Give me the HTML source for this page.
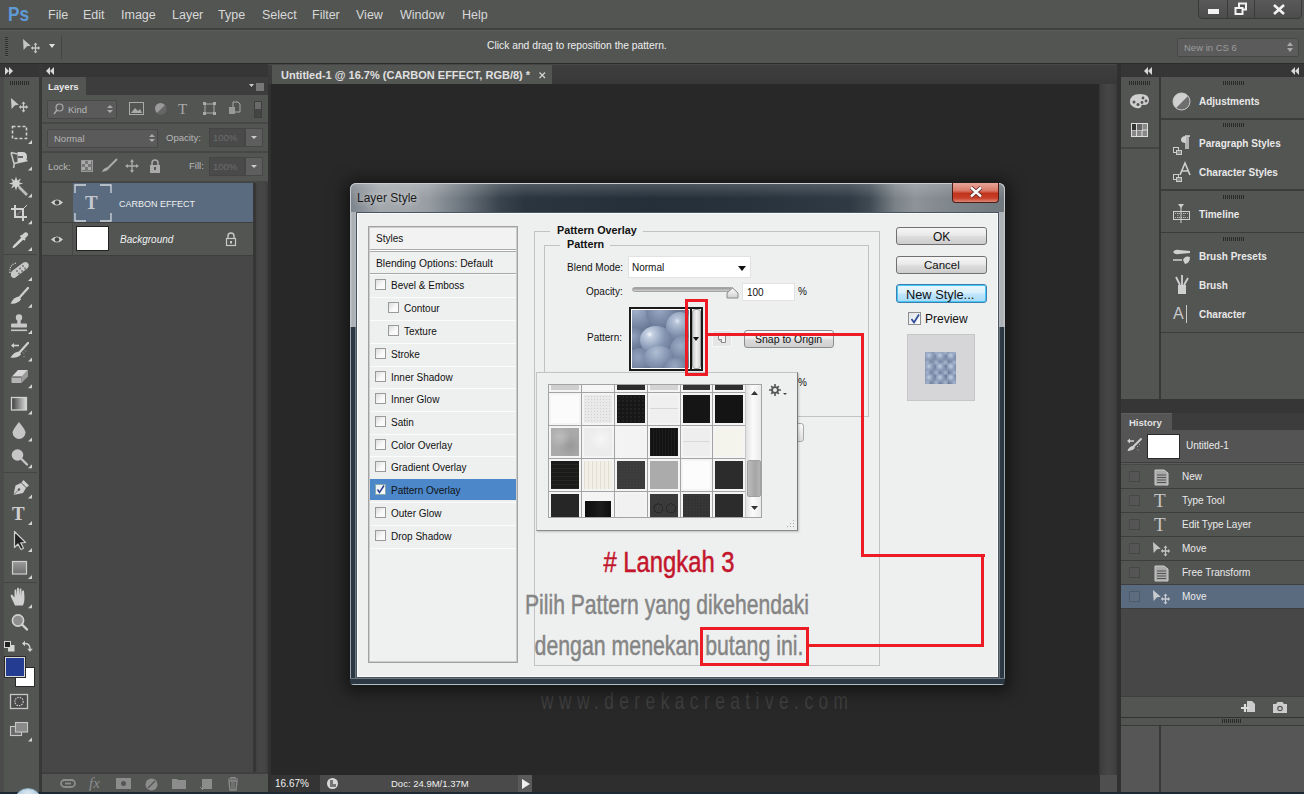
<!DOCTYPE html>
<html><head><meta charset="utf-8">
<style>
*{margin:0;padding:0;box-sizing:border-box}
html,body{width:1304px;height:794px;overflow:hidden}
body{position:relative;background:#535553;font-family:"Liberation Sans",sans-serif;color:#e6e6e6}
.a{position:absolute}
.t{position:absolute;white-space:nowrap;line-height:1}
.m{font-size:12.5px;color:#d8d8d8;top:9px}
.ic{position:absolute;overflow:visible}
.corner{position:absolute;width:0;height:0;border-left:4px solid transparent;border-bottom:4px solid #d0d0d0}
.pl{font-size:10px;font-weight:bold;color:#e8e8e8}
.grip{position:absolute;height:4px;background:repeating-linear-gradient(90deg,#2a2a2a 0 1px,transparent 1px 2px)}
.hi{position:absolute;left:1121px;width:183px;height:24px;border-bottom:1px solid #3d3d3d}
.hcb{position:absolute;left:8px;top:6px;width:11px;height:11px;border:1px solid #474747;background:#555}
.ht{position:absolute;left:61px;top:7px;font-size:10px;color:#eaeaea;white-space:nowrap;line-height:1}
</style></head><body>

<!-- ===== MENU BAR ===== -->
<div class="t" style="left:8px;top:3px;font-size:21px;font-weight:bold;color:#5f9ad6;transform:scaleX(0.82);transform-origin:0 0">Ps</div>
<div class="t m" style="left:48px">File</div>
<div class="t m" style="left:83px">Edit</div>
<div class="t m" style="left:121px">Image</div>
<div class="t m" style="left:172px">Layer</div>
<div class="t m" style="left:218px">Type</div>
<div class="t m" style="left:262px">Select</div>
<div class="t m" style="left:312px">Filter</div>
<div class="t m" style="left:356px">View</div>
<div class="t m" style="left:400px">Window</div>
<div class="t m" style="left:462px">Help</div>
<!-- window buttons -->
<div class="a" style="left:1198px;top:-2px;width:104px;height:21px;border:1px solid #3a3a3a;border-radius:0 0 4px 4px;background:linear-gradient(#5a5a5a,#4c4c4c)"></div>
<div class="a" style="left:1227px;top:0;width:1px;height:18px;background:#3a3a3a"></div>
<div class="a" style="left:1254px;top:0;width:1px;height:18px;background:#3a3a3a"></div>
<div class="a" style="left:1208px;top:9px;width:11px;height:5px;background:#f2f2f2"></div>
<svg class="ic" style="left:1234px;top:2px" width="14" height="14"><rect x="5" y="1.5" width="7" height="6" fill="none" stroke="#f2f2f2" stroke-width="2"/><rect x="1.5" y="6" width="7" height="6" fill="#4f4f4f" stroke="#f2f2f2" stroke-width="2"/></svg>
<svg class="ic" style="left:1272px;top:3px" width="14" height="13"><path d="M2 2L12 11M12 2L2 11" stroke="#f2f2f2" stroke-width="2.6"/></svg>

<!-- ===== OPTIONS BAR ===== -->
<div class="a" style="left:0;top:28px;width:1304px;height:2px;background:#404040"></div>
<div class="a" style="left:0;top:30px;width:1304px;height:1px;background:#5e5e5e"></div>
<div class="a" style="left:5px;top:37px;width:3px;height:20px;background:repeating-linear-gradient(#2f2f2f 0 1px,#5a5a5a 1px 2px)"></div>
<svg class="ic" style="left:22px;top:38px" width="20" height="16"><path d="M1 1L8.8 7.8L5 8.3L1.6 12Z" fill="#c4c4c4"/><path d="M13.5 6V14M10.5 10H16.5" stroke="#c4c4c4" stroke-width="1.3"/><path d="M13.5 4.5l-2 2.2h4zM13.5 15.5l-2-2.2h4zM8.8 10l2.2-2v4zM18.2 10l-2.2-2v4z" fill="#c4c4c4"/></svg>
<svg class="ic" style="left:49px;top:44px" width="7" height="5"><path d="M0 0H6L3 4Z" fill="#e0e0e0"/></svg>
<div class="a" style="left:61px;top:35px;width:1px;height:24px;background:#444"></div>
<div class="t" style="left:487px;top:41px;font-size:10.3px;color:#eeeeee">Click and drag to reposition the pattern.</div>
<div class="a" style="left:1177px;top:38px;width:122px;height:19px;border:1px solid #474747;border-radius:2px;background:#5b5b5b"></div>
<div class="t" style="left:1184px;top:43px;font-size:9.5px;color:#9c9c9c">New in CS 6</div>
<svg class="ic" style="left:1287px;top:41px" width="7" height="12"><path d="M0 5L3 1L6 5ZM0 7L3 11L6 7Z" fill="#a8a8a8"/></svg>
<div class="a" style="left:0;top:63px;width:1304px;height:1px;background:#2c2c2c"></div>

<!-- ===== HEADER ROWS ===== -->
<div class="a" style="left:0;top:64px;width:268px;height:13px;background:#363636"></div>
<svg class="ic" style="left:5px;top:67px" width="9" height="8"><path d="M0 0L4 4L0 8ZM4 0L8 4L4 8Z" fill="#d8d8d8"/></svg>
<svg class="ic" style="left:46px;top:67px" width="9" height="8"><path d="M4 0L0 4L4 8ZM8 0L4 4L8 8Z" fill="#d8d8d8"/></svg>

<!-- ===== TOOLS PANEL ===== -->
<div class="a" style="left:0;top:77px;width:39px;height:717px;background:#535553"></div>
<div class="a" style="left:0;top:77px;width:4px;height:717px;background:#4b4b4b"></div>
<div class="a" style="left:39px;top:64px;width:3px;height:730px;background:#383838"></div>
<div class="grip" style="left:10px;top:81px;width:20px"></div>
<!-- tool icons -->
<svg class="ic" style="left:0;top:0" width="40" height="794" viewBox="0 0 40 794">
<defs>
<linearGradient id="tg1" x1="0" x2="1"><stop offset="0" stop-color="#3c3c3c"/><stop offset="1" stop-color="#dcdcdc"/></linearGradient>
<linearGradient id="tg2" x1="0" y1="0" x2="0" y2="1"><stop offset="0" stop-color="#9a9a9a"/><stop offset="1" stop-color="#6e6e6e"/></linearGradient>
</defs>
<g fill="#c9c9c9" stroke="none">
<!-- move -->
<path d="M11 98L18.8 104.8L15 105.3L11.6 109Z"/>
<path d="M23.5 101.5l-2 2.2h4zM23.5 112.5l-2-2.2h4zM18.8 107l2.2-2v4zM28.2 107l-2.2-2v4z"/>
</g>
<path d="M23.5 103V111M20.5 107H26.5" stroke="#c9c9c9" stroke-width="1.3"/>
<!-- marquee -->
<rect x="12.5" y="126.5" width="14" height="12" fill="none" stroke="#cfcfcf" stroke-width="1.6" stroke-dasharray="3 2"/>
<!-- magnetic lasso -->
<path d="M11 152.5L17.5 154M11 152.5L14 163.5L27.5 160.5M14.5 163L13.5 168" stroke="#c8c8c8" stroke-width="1.5" fill="none"/>
<path d="M17.5 152H22.5Q27 152 27 157Q27 162 22.5 162H17.5Z" fill="#d2d2d2"/>
<path d="M18 157H23" stroke="#5a5a5a" stroke-width="1.8"/>
<!-- wand -->
<path d="M16 176.5l1.3 4 3.7-2-2 3.7 4 1.3-4 1.3 2 3.7-3.7-2-1.3 4-1.3-4-3.7 2 2-3.7-4-1.3 4-1.3-2-3.7 3.7 2z" fill="#cfcfcf"/>
<path d="M19 187L27 195" stroke="#bdbdbd" stroke-width="2.6"/>
<!-- crop -->
<path d="M15 205V217H27M11 209H23V221" fill="none" stroke="#d2d2d2" stroke-width="2"/>
<path d="M23 209L27 205" stroke="#cfcfcf" stroke-width="1"/>
<path d="M16.5 215.5L21.5 210.5" stroke="#777" stroke-width="1.5"/>
<!-- eyedropper -->
<path d="M21 236L24 233Q26 231.5 27.5 233Q29 234.5 27 236.5L24 239.5Z" fill="#cfcfcf"/>
<path d="M20.5 235.5L25 240" stroke="#cfcfcf" stroke-width="2"/>
<path d="M22 238L14.5 245.5L13 247.5L15 246.5L23.5 238.5" fill="none" stroke="#d6d6d6" stroke-width="1.4"/>
<!-- sep -->
<rect x="4" y="254" width="33" height="1" fill="#444"/>
<!-- healing -->
<path d="M12 271L23.5 262.5Q27 261 28.5 264Q29.5 267 26.5 269L15.5 277.5Q12.5 279 11 276Q10 273 12 271Z" fill="#c8c8c8"/>
<g fill="#6a6a6a"><circle cx="17" cy="271" r="0.9"/><circle cx="20" cy="268.5" r="0.9"/><circle cx="23" cy="266" r="0.9"/><circle cx="19" cy="273.5" r="0.9"/><circle cx="22" cy="271" r="0.9"/><circle cx="25" cy="268.5" r="0.9"/></g>
<path d="M10 273Q9 265 16 263" fill="none" stroke="#dcdcdc" stroke-width="1.2" stroke-dasharray="1 1.3"/>
<!-- brush -->
<path d="M28 288L19 298" stroke="#cfcfcf" stroke-width="2.2" stroke-linecap="round"/>
<path d="M19.5 296.5Q14 296.5 10.5 303.5Q17 304.5 21 299.5Z" fill="#d0d0d0"/>
<!-- stamp -->
<circle cx="19" cy="317.5" r="3.2" fill="#c8c8c8"/>
<rect x="17.3" y="319" width="3.4" height="5" fill="#c8c8c8"/>
<rect x="11" y="323.5" width="16" height="4" rx="1" fill="#c8c8c8"/>
<rect x="11" y="329.5" width="16" height="1.6" fill="#c8c8c8"/>
<!-- history brush -->
<path d="M28 343L19 353" stroke="#cfcfcf" stroke-width="2.2" stroke-linecap="round"/>
<path d="M19.5 351.5Q14 351.5 10.5 357.5Q17 358.5 21 354.5Z" fill="#d0d0d0"/>
<path d="M12 345.5H19" stroke="#cfcfcf" stroke-width="1.6"/><path d="M11 345.5L14 343V348Z" fill="#cfcfcf"/>
<path d="M23 352.5l1 1M25 350.5l1 1M23.5 356l1 1" stroke="#aaa" stroke-width="1"/>
<!-- eraser -->
<path d="M11.5 377L18 370H28L21.5 377Z" fill="#d6d6d6"/>
<path d="M11.5 377H21.5V383H11.5Z" fill="#b4b4b4"/>
<path d="M21.5 377L28 370V376.5L21.5 383Z" fill="#9a9a9a"/>
<path d="M11.5 377H21.5" stroke="#444" stroke-width="1"/>
<!-- gradient -->
<rect x="11.5" y="397.5" width="15" height="12.5" fill="url(#tg1)" stroke="#d0d0d0" stroke-width="1.3"/>
<!-- blur -->
<path d="M19 422Q25.5 430 25.5 432.5A6.3 6.3 0 0 1 12.6 432.5Q12.6 430 19 422Z" fill="#c6c6c6"/>
<!-- dodge -->
<circle cx="17.5" cy="455" r="5.8" fill="#c6c6c6"/>
<path d="M21.5 459L27 464.5" stroke="#c6c6c6" stroke-width="2.3" stroke-linecap="round"/>
<!-- sep -->
<rect x="4" y="472" width="33" height="1" fill="#444"/>
<!-- pen -->
<path d="M23.5 480L29 485.5L26.5 487.5L21.5 482.5Z" fill="#cfcfcf"/>
<path d="M21 483L26 488L23 493L13.5 495L15.5 485.5Z" fill="#cfcfcf"/>
<circle cx="19" cy="489.5" r="1.2" fill="#555"/><path d="M13.5 495L18.5 490" stroke="#555" stroke-width="0.8"/>
<!-- path select -->
<path d="M14.5 531.5V547.5L18 544L21 549.5L23.5 548.3L20.7 542.8L25.5 542.5Z" fill="#222" stroke="#cfcfcf" stroke-width="1.2" stroke-linejoin="round"/>
<!-- rectangle -->
<rect x="12.5" y="561.5" width="14" height="12.5" fill="url(#tg2)" stroke="#cfcfcf" stroke-width="1.2"/>
<!-- sep -->
<rect x="4" y="582" width="33" height="1" fill="#444"/>
<!-- hand -->
<path d="M15 605.5L11 597Q10 594.5 12 594.5L14.5 597.5V591Q14.5 589 16.2 589.5L17 596V589Q17 587.5 18.7 587.8L19.5 596V589.5Q19.8 588 21.3 588.5L22 596.5V591.5Q22.3 590 24 590.5L24.5 598Q24.5 602 23 605.5Z" fill="#d0d0d0"/>
<!-- zoom -->
<circle cx="18" cy="620.5" r="5.6" fill="#8e8e8e" stroke="#d2d2d2" stroke-width="1.6"/>
<path d="M22 624.5L27 629.5" stroke="#d2d2d2" stroke-width="2.4" stroke-linecap="round"/>
<!-- default colors -->
<rect x="8.5" y="645.5" width="5.5" height="5.5" fill="#d6d6d6" stroke="#d6d6d6" stroke-width="1"/>
<rect x="4.5" y="641.5" width="6" height="6" fill="#222" stroke="#d6d6d6" stroke-width="1"/>
<!-- swap -->
<path d="M24 643.5Q30 643 30 649" fill="none" stroke="#cfcfcf" stroke-width="1.4"/>
<path d="M22 643.5L25 640.8V646.2ZM30 652L27.2 648.8H32.8Z" fill="#cfcfcf"/>
<!-- quick mask -->
<rect x="10.5" y="694.5" width="17" height="14" fill="#4a4a4a" stroke="#c6c6c6" stroke-width="1.3"/>
<circle cx="19" cy="701.5" r="4.2" fill="none" stroke="#c6c6c6" stroke-width="1.2" stroke-dasharray="1.5 1"/>
<!-- screen mode -->
<rect x="10.5" y="726.5" width="11" height="9" fill="#6a6a6a" stroke="#c6c6c6" stroke-width="1.1"/>
<rect x="15.5" y="722.5" width="12" height="9.5" fill="#8a8a8a" stroke="#c6c6c6" stroke-width="1.1"/>
<!-- corners -->
<g fill="#d4d4d4">
<path d="M32 140V144H28Z"/><path d="M32 166.5V170.5H28Z"/><path d="M32 193.5V197.5H28Z"/><path d="M32 220.3V224.3H28Z"/><path d="M32 247V251H28Z"/>
<path d="M32 277V281H28Z"/><path d="M32 303.8V307.8H28Z"/><path d="M32 330V334H28Z"/><path d="M32 357.6V361.6H28Z"/><path d="M32 384.3V388.3H28Z"/><path d="M32 410.5V414.5H28Z"/><path d="M32 437.6V441.6H28Z"/><path d="M32 464.3V468.3H28Z"/>
<path d="M32 494.5V498.5H28Z"/><path d="M32 521V525H28Z"/><path d="M32 548V552H28Z"/><path d="M32 575V579H28Z"/><path d="M32 604.3V608.3H28Z"/><path d="M32 737.5V741.5H28Z"/>
</g>
</svg>
<div class="t" style="left:12px;top:504px;font-family:'Liberation Serif',serif;font-weight:bold;font-size:19px;color:#cfcfcf">T</div>
<div class="a" style="left:15px;top:667px;width:20px;height:20px;background:#fff;border:1px solid #2a2a2a"></div>
<div class="a" style="left:5px;top:657px;width:20px;height:20px;background:#243c92;border:1px solid #d8d8d8;outline:1px solid #2a2a2a"></div>

<!-- ===== LAYERS PANEL ===== -->
<div class="a" style="left:42px;top:77px;width:226px;height:18px;background:#3d3d3d"></div>
<div class="a" style="left:42px;top:77px;width:44px;height:18px;background:#535553"></div>
<div class="t" style="left:48px;top:82px;font-size:9.5px;font-weight:bold;color:#e8e8e8">Layers</div>
<svg class="ic" style="left:249px;top:83px" width="16" height="8"><path d="M0 1H5L2.5 4Z" fill="#ccc"/><rect x="7" y="0" width="8" height="8" fill="#777"/></svg>
<div class="a" style="left:42px;top:95px;width:226px;height:87px;background:#535553"></div>
<div class="a" style="left:42px;top:122px;width:226px;height:2px;background:#474747"></div>
<div class="a" style="left:42px;top:151px;width:226px;height:2px;background:#474747"></div>
<div class="a" style="left:42px;top:181px;width:226px;height:2px;background:#454545"></div>
<!-- row1 -->
<div class="a" style="left:47px;top:100px;width:70px;height:19px;border:1px solid #484848;border-radius:2px;background:#5a5a5a"></div>
<svg class="ic" style="left:53px;top:103px" width="11" height="12"><circle cx="6.5" cy="4.5" r="3.5" fill="none" stroke="#aaa" stroke-width="1.2"/><path d="M4 7L1 11" stroke="#aaa" stroke-width="1.4"/></svg>
<div class="t" style="left:68px;top:105px;font-size:9.5px;color:#b8b8b8">Kind</div>
<svg class="ic" style="left:107px;top:104px" width="6" height="11"><path d="M0 4L3 1L6 4ZM0 6L3 9L6 6Z" fill="#aaa"/></svg>
<svg class="ic" style="left:129px;top:102px" width="15" height="13"><rect x="0.5" y="0.5" width="14" height="12" fill="none" stroke="#aaa"/><path d="M2 11L6 6L9 9L11 7L13 11Z" fill="#aaa"/></svg>
<svg class="ic" style="left:154px;top:102px" width="13" height="13"><circle cx="6.5" cy="6.5" r="5.5" fill="#9a9a9a"/><path d="M11 3L3 11A5.5 5.5 0 0 0 11 3Z" fill="#666"/></svg>
<div class="t" style="left:178px;top:102px;font-family:'Liberation Serif',serif;font-size:15px;color:#aaa">T</div>
<svg class="ic" style="left:203px;top:102px" width="13" height="13"><rect x="2" y="2" width="9" height="9" fill="none" stroke="#aaa"/><rect x="0" y="0" width="3" height="3" fill="#aaa"/><rect x="10" y="0" width="3" height="3" fill="#aaa"/><rect x="0" y="10" width="3" height="3" fill="#aaa"/><rect x="10" y="10" width="3" height="3" fill="#aaa"/></svg>
<svg class="ic" style="left:228px;top:101px" width="13" height="14"><path d="M5 1H10L12 3V11H5Z" fill="none" stroke="#aaa"/><rect x="1" y="6" width="6" height="7" fill="#999"/></svg>
<div class="a" style="left:254px;top:101px;width:8px;height:17px;background:#444;border:1px solid #3e3e3e"></div>
<div class="a" style="left:255px;top:102px;width:6px;height:7px;background:#6a6a6a"></div>
<!-- row2 -->
<div class="a" style="left:47px;top:129px;width:111px;height:19px;border:1px solid #484848;border-radius:2px;background:#5a5a5a"></div>
<div class="t" style="left:54px;top:134px;font-size:9.5px;color:#b4b4b4">Normal</div>
<svg class="ic" style="left:149px;top:133px" width="6" height="11"><path d="M0 4L3 1L6 4ZM0 6L3 9L6 6Z" fill="#aaa"/></svg>
<div class="t" style="left:166px;top:133px;font-size:9.5px;color:#b8b8b8">Opacity:</div>
<div class="a" style="left:209px;top:128px;width:36px;height:19px;background:#4a4a4a;border:1px solid #444"></div>
<div class="t" style="left:213px;top:133px;font-size:9.5px;color:#6c6c6c">100%</div>
<div class="a" style="left:245px;top:128px;width:18px;height:19px;background:#5e5e5e;border:1px solid #474747"></div>
<svg class="ic" style="left:251px;top:136px" width="7" height="4"><path d="M0 0H6L3 3Z" fill="#ccc"/></svg>
<!-- row3 -->
<div class="t" style="left:48px;top:162px;font-size:9.5px;color:#b8b8b8">Lock:</div>
<svg class="ic" style="left:81px;top:160px" width="12" height="12"><rect x="0.5" y="0.5" width="11" height="11" fill="#777" stroke="#999"/><path d="M1 1h3v3H1zM7 1h3v3H7zM4 4h3v3H4zM1 7h3v3H1zM7 7h3v3H7z" fill="#aaa"/></svg>
<svg class="ic" style="left:101px;top:158px" width="17" height="15"><path d="M16 1L7 10" stroke="#aaa" stroke-width="2"/><path d="M7 9Q2 10 1 14Q5 14 8 11Z" fill="#aaa"/></svg>
<svg class="ic" style="left:125px;top:159px" width="14" height="14"><path d="M7 1V13M1 7H13" stroke="#aaa" stroke-width="1.4"/><path d="M7 0L5 3H9ZM7 14L5 11H9ZM0 7L3 5V9ZM14 7L11 5V9Z" fill="#aaa"/></svg>
<svg class="ic" style="left:149px;top:159px" width="12" height="14"><path d="M3 6V4A3 3 0 0 1 9 4V6" fill="none" stroke="#aaa" stroke-width="1.5"/><rect x="1" y="6" width="10" height="8" fill="#aaa"/><rect x="5" y="8" width="2" height="3" fill="#555"/></svg>
<div class="t" style="left:189px;top:161px;font-size:9.5px;color:#b8b8b8">Fill:</div>
<div class="a" style="left:209px;top:157px;width:36px;height:19px;background:#4a4a4a;border:1px solid #444"></div>
<div class="t" style="left:213px;top:162px;font-size:9.5px;color:#6c6c6c">100%</div>
<div class="a" style="left:245px;top:157px;width:18px;height:19px;background:#5e5e5e;border:1px solid #474747"></div>
<svg class="ic" style="left:251px;top:165px" width="7" height="4"><path d="M0 0H6L3 3Z" fill="#ccc"/></svg>
<!-- layer rows -->
<div class="a" style="left:42px;top:183px;width:211px;height:40px;background:#535553"></div>
<div class="a" style="left:73px;top:183px;width:180px;height:39px;background:#5a6b80"></div>
<svg class="ic" style="left:74px;top:184px" width="38" height="38"><path d="M1 9V1H12M26 1H37V9M37 29V37H26M12 37H1V29" fill="none" stroke="#d2d7dd" stroke-width="1.3"/></svg>
<div class="t" style="left:85px;top:193px;font-family:'Liberation Serif',serif;font-weight:bold;font-size:19px;color:#c4c8cd">T</div>
<div class="t" style="left:119px;top:200px;font-size:9px;color:#eef0ef">CARBON EFFECT</div>
<div class="a" style="left:42px;top:222px;width:211px;height:1px;background:#3e3e3e"></div>
<div class="a" style="left:42px;top:223px;width:211px;height:32px;background:#535553"></div>
<div class="a" style="left:72px;top:223px;width:1px;height:32px;background:#474747"></div>
<div class="a" style="left:76px;top:226px;width:33px;height:25px;background:#fff;border:1px solid #222"></div>
<div class="t" style="left:120px;top:235px;font-size:10px;font-style:italic;color:#eef0ef">Background</div>
<svg class="ic" style="left:225px;top:232px" width="12" height="14"><path d="M3 6V4A3 3 0 0 1 9 4V6" fill="none" stroke="#c8c8c8" stroke-width="1.4"/><rect x="1.5" y="6.5" width="9" height="7" fill="none" stroke="#c8c8c8" stroke-width="1.2"/><rect x="5" y="9" width="2" height="2.5" fill="#c8c8c8"/></svg>
<svg class="ic" style="left:50px;top:198px" width="14" height="9"><path d="M1 4.5Q7 -1.5 13 4.5Q7 10.5 1 4.5Z" fill="#d0d0d0"/><circle cx="7" cy="4.5" r="2.3" fill="#444"/></svg>
<svg class="ic" style="left:50px;top:235px" width="14" height="9"><path d="M1 4.5Q7 -1.5 13 4.5Q7 10.5 1 4.5Z" fill="#d0d0d0"/><circle cx="7" cy="4.5" r="2.3" fill="#444"/></svg>
<div class="a" style="left:42px;top:255px;width:211px;height:1px;background:#3e3e3e"></div>
<div class="a" style="left:42px;top:256px;width:211px;height:516px;background:#474747"></div>
<div class="a" style="left:253px;top:183px;width:15px;height:589px;background:linear-gradient(90deg,#363636 0 3px,#424242 3px,#474747 8px,#434343 13px,#3a3a3a)"></div>
<div class="a" style="left:42px;top:772px;width:226px;height:2px;background:#3f3f3f"></div>
<div class="a" style="left:42px;top:774px;width:226px;height:18px;background:#535553"></div>
<svg class="ic" style="left:60px;top:778px" width="16" height="12"><rect x="1" y="2" width="14" height="7" rx="3.5" fill="none" stroke="#8c8c8c" stroke-width="1.8"/><path d="M5 5.5H11" stroke="#8c8c8c" stroke-width="1.8"/></svg>
<div class="t" style="left:89px;top:776px;font-family:'Liberation Serif',serif;font-style:italic;font-size:15px;color:#8c8c8c">fx</div>
<svg class="ic" style="left:116px;top:778px" width="16" height="12"><rect x="0" y="0" width="15" height="11" fill="#8c8c8c"/><circle cx="7.5" cy="5.5" r="2.5" fill="#555"/></svg>
<svg class="ic" style="left:145px;top:778px" width="13" height="13"><circle cx="6.5" cy="6.5" r="6" fill="#8c8c8c"/><path d="M10 3L3 10" stroke="#555" stroke-width="1.3"/></svg>
<svg class="ic" style="left:172px;top:778px" width="15" height="12"><path d="M0 1H5L6 2H14V11H0Z" fill="#8c8c8c"/></svg>
<svg class="ic" style="left:199px;top:778px" width="14" height="13"><path d="M3 1H13V11H3Z" fill="#8c8c8c"/><path d="M1 9L4 12" stroke="#8c8c8c" stroke-width="1"/></svg>
<svg class="ic" style="left:227px;top:777px" width="12" height="14"><path d="M1 2H11M4 2V0.5H8V2" stroke="#8c8c8c" stroke-width="1.2" fill="none"/><path d="M2 4H10L9 13H3Z" fill="none" stroke="#8c8c8c" stroke-width="1.3"/><path d="M5 5V12M7 5V12" stroke="#8c8c8c"/></svg>

<!-- ===== DOCUMENT ===== -->
<div class="a" style="left:268px;top:64px;width:853px;height:21px;background:linear-gradient(#3e3e3e,#383838);border-top:1px solid #474747"></div>
<div class="a" style="left:268px;top:85px;width:3px;height:707px;background:#313131"></div>
<div class="a" style="left:272px;top:65px;width:280px;height:19px;background:#535553"></div>
<div class="t" style="left:281px;top:70px;font-size:11px;font-weight:bold;color:#e0e0e0">Untitled-1 @ 16.7% (CARBON EFFECT, RGB/8) *</div>
<svg class="ic" style="left:539px;top:72px" width="7" height="7"><path d="M0.5 0.5L6 6M6 0.5L0.5 6" stroke="#d0d0d0" stroke-width="1.3"/></svg>
<div class="a" style="left:271px;top:84px;width:829px;height:691px;background:#282828"></div>
<div class="a" style="left:1099px;top:84px;width:18px;height:691px;background:linear-gradient(90deg,#363636,#3f3f3f 3px,#464646 9px,#414141 15px,#3a3a3a)"></div>
<div class="a" style="left:1117px;top:64px;width:4px;height:730px;background:#303030"></div>
<div class="a" style="left:1100px;top:775px;width:17px;height:17px;background:#4f4f4f"></div>
<!-- status bar -->
<div class="a" style="left:271px;top:775px;width:829px;height:17px;background:#2e2e2e"></div>
<div class="a" style="left:271px;top:775px;width:49px;height:17px;background:#343434"></div>
<div class="t" style="left:275px;top:779px;font-size:10px;color:#eef0ef">16.67%</div>
<div class="a" style="left:320px;top:775px;width:24px;height:17px;background:#4a4a4a"></div>
<svg class="ic" style="left:326px;top:777px" width="13" height="13"><circle cx="6.5" cy="6.5" r="5.5" fill="#d8d8d8"/><path d="M4 3V10H10V7H7V3Z" fill="#777"/></svg>
<div class="a" style="left:344px;top:775px;width:174px;height:17px;background:#4a4a4a"></div>
<div class="t" style="left:391px;top:779px;font-size:9.5px;color:#eef0ef">Doc: 24.9M/1.37M</div>
<div class="a" style="left:518px;top:775px;width:14px;height:17px;background:#5a5a5a"></div>
<svg class="ic" style="left:522px;top:779px" width="8" height="10"><path d="M0 0L8 5L0 10Z" fill="#eef0ef"/></svg>
<div class="t" style="left:541px;top:689px;font-size:24px;color:#3f3f3f;letter-spacing:7.6px;transform:scaleX(0.72);transform-origin:0 0">www.derekacreative.com</div>

<!-- DIALOG_START -->
<!-- ===== DIALOG ===== -->
<div class="a" style="left:350px;top:183px;width:655px;height:502px;border-radius:6px 6px 4px 4px;box-shadow:0 2px 16px 5px rgba(0,0,0,0.5);background:#2b3743"></div>
<!-- title bar gradient -->
<div class="a" style="left:350px;top:183px;width:655px;height:145px;border-radius:6px 6px 0 0;background:linear-gradient(90deg,#7b8289 0px,#a3a8ad 30px,#a0a5aa 60px,#979da3 78px,#6f7880 110px,#39434d 150px,#2a3540 175px,#252f39 300px,#28323c 400px,#2f3a44 500px,#3f4a53 520px,#7a8288 545px,#8d9398 565px,#7f868c 600px,#70777d 655px)"></div>
<div class="a" style="left:350px;top:183px;width:655px;height:30px;border-radius:6px 6px 0 0;background:linear-gradient(180deg,rgba(255,255,255,0.18),rgba(255,255,255,0) 50%);border:1px solid #c9cdd1;border-bottom:none"></div>
<div class="a" style="left:350px;top:212px;width:7px;height:115px;background:linear-gradient(90deg,#c4c8cc,#a9aeb3 40%,#b9bdc1)"></div>
<div class="a" style="left:998px;top:212px;width:7px;height:115px;background:linear-gradient(90deg,#b9bdc1,#a9aeb3 60%,#c4c8cc)"></div>
<div class="a" style="left:350px;top:327px;width:6px;height:351px;background:linear-gradient(90deg,#9aa4ac 0 1px,#2b3743 1px 5px,#6c7780 5px)"></div>
<div class="a" style="left:999px;top:327px;width:6px;height:351px;background:linear-gradient(90deg,#6c7780 0 1px,#2b3743 1px 5px,#9aa4ac 5px)"></div>
<div class="a" style="left:350px;top:678px;width:655px;height:7px;background:linear-gradient(180deg,#6c7780 0 1px,#2b3743 1px 6px,#b4bcc3 6px);border-radius:0 0 4px 4px"></div>
<div class="t" style="left:357px;top:192px;font-size:12px;color:#1c1c1c;text-shadow:0 0 6px rgba(255,255,255,0.8)">Layer Style</div>
<!-- close button -->
<div class="a" style="left:952px;top:183px;width:47px;height:20px;border:1px solid #4b1c16;border-top:none;border-radius:0 0 4px 4px;background:linear-gradient(180deg,#e9a69a 0%,#d97a68 40%,#c2331c 55%,#c8412a 80%,#de8a78 100%)"></div>
<svg class="ic" style="left:969px;top:186px" width="14" height="12"><path d="M2 1.5L12 10.5M12 1.5L2 10.5" stroke="#5a2520" stroke-width="4"/><path d="M2 1.5L12 10.5M12 1.5L2 10.5" stroke="#fafafa" stroke-width="2.4"/></svg>
<!-- client area -->
<div class="a" style="left:356px;top:212px;width:643px;height:466px;background:#eef0ef;border:1px solid #4a545e;box-shadow:inset 0 0 0 1px #fafbfc"></div>

<!-- styles list -->
<div class="a" style="left:368px;top:226px;width:150px;height:437px;border:1px solid #a2a2a2;box-shadow:inset 0 0 0 1px #cdcdcd;background:#eff0f0"></div>
<div class="a" style="left:370px;top:228px;width:146px;height:21px;background:#f2f2f2"></div>
<div class="a" style="left:370px;top:249px;width:146px;height:3px;background:linear-gradient(#aaa 0 1px,#fff 1px 2px,#aaa 2px)"></div>
<div class="a" style="left:370px;top:273px;width:146px;height:1px;background:#a8a8a8"></div>
<div class="t" style="left:376px;top:234px;font-size:10px;color:#111">Styles</div>
<div class="t" style="left:376px;top:259px;font-size:10.3px;color:#111">Blending Options: Default</div>
<div class="a" style="left:370px;top:274px;width:146px;height:23px;background:#eef0f0;border-top:1px solid #fbfbfb"></div>
<div class="a" style="left:375px;top:279px;width:11px;height:11px;border:1px solid #9a9a9a;background:linear-gradient(135deg,#dcdcdc,#fafafa 60%)"></div>
<div class="t" style="left:391px;top:281px;font-size:10px;color:#111">Bevel &amp; Emboss</div>
<div class="a" style="left:370px;top:297px;width:146px;height:23px;background:#eef0f0;border-top:1px solid #fbfbfb"></div>
<div class="a" style="left:388px;top:302px;width:11px;height:11px;border:1px solid #9a9a9a;background:linear-gradient(135deg,#dcdcdc,#fafafa 60%)"></div>
<div class="t" style="left:404px;top:304px;font-size:10px;color:#111">Contour</div>
<div class="a" style="left:370px;top:320px;width:146px;height:23px;background:#eef0f0;border-top:1px solid #fbfbfb"></div>
<div class="a" style="left:388px;top:325px;width:11px;height:11px;border:1px solid #9a9a9a;background:linear-gradient(135deg,#dcdcdc,#fafafa 60%)"></div>
<div class="t" style="left:404px;top:327px;font-size:10px;color:#111">Texture</div>
<div class="a" style="left:370px;top:343px;width:146px;height:23px;background:#eef0f0;border-top:1px solid #fbfbfb"></div>
<div class="a" style="left:375px;top:348px;width:11px;height:11px;border:1px solid #9a9a9a;background:linear-gradient(135deg,#dcdcdc,#fafafa 60%)"></div>
<div class="t" style="left:391px;top:350px;font-size:10px;color:#111">Stroke</div>
<div class="a" style="left:370px;top:366px;width:146px;height:22px;background:#eef0f0;border-top:1px solid #fbfbfb"></div>
<div class="a" style="left:375px;top:371px;width:11px;height:11px;border:1px solid #9a9a9a;background:linear-gradient(135deg,#dcdcdc,#fafafa 60%)"></div>
<div class="t" style="left:391px;top:373px;font-size:10px;color:#111">Inner Shadow</div>
<div class="a" style="left:370px;top:388px;width:146px;height:23px;background:#eef0f0;border-top:1px solid #fbfbfb"></div>
<div class="a" style="left:375px;top:393px;width:11px;height:11px;border:1px solid #9a9a9a;background:linear-gradient(135deg,#dcdcdc,#fafafa 60%)"></div>
<div class="t" style="left:391px;top:395px;font-size:10px;color:#111">Inner Glow</div>
<div class="a" style="left:370px;top:411px;width:146px;height:23px;background:#eef0f0;border-top:1px solid #fbfbfb"></div>
<div class="a" style="left:375px;top:416px;width:11px;height:11px;border:1px solid #9a9a9a;background:linear-gradient(135deg,#dcdcdc,#fafafa 60%)"></div>
<div class="t" style="left:391px;top:418px;font-size:10px;color:#111">Satin</div>
<div class="a" style="left:370px;top:434px;width:146px;height:22px;background:#eef0f0;border-top:1px solid #fbfbfb"></div>
<div class="a" style="left:375px;top:439px;width:11px;height:11px;border:1px solid #9a9a9a;background:linear-gradient(135deg,#dcdcdc,#fafafa 60%)"></div>
<div class="t" style="left:391px;top:441px;font-size:10px;color:#111">Color Overlay</div>
<div class="a" style="left:370px;top:456px;width:146px;height:23px;background:#eef0f0;border-top:1px solid #fbfbfb"></div>
<div class="a" style="left:375px;top:461px;width:11px;height:11px;border:1px solid #9a9a9a;background:linear-gradient(135deg,#dcdcdc,#fafafa 60%)"></div>
<div class="t" style="left:391px;top:463px;font-size:10px;color:#111">Gradient Overlay</div>
<div class="a" style="left:370px;top:479px;width:146px;height:23px;background:#eef0f0;border-top:1px solid #fbfbfb"></div><div class="a" style="left:370px;top:479px;width:146px;height:21px;background:#4b87c9"></div>
<div class="a" style="left:375px;top:484px;width:11px;height:11px;border:1px solid #8aa;background:linear-gradient(135deg,#e8eef4,#fdfdfd)"></div>
<svg class="ic" style="left:376px;top:485px" width="9" height="9"><path d="M1.5 4.5L3.5 7.5L8 0.5" fill="none" stroke="#2a3f8a" stroke-width="1.5"/></svg>
<div class="t" style="left:391px;top:486px;font-size:10px;color:#111">Pattern Overlay</div>
<div class="a" style="left:370px;top:502px;width:146px;height:23px;background:#eef0f0;border-top:1px solid #fbfbfb"></div>
<div class="a" style="left:375px;top:507px;width:11px;height:11px;border:1px solid #9a9a9a;background:linear-gradient(135deg,#dcdcdc,#fafafa 60%)"></div>
<div class="t" style="left:391px;top:509px;font-size:10px;color:#111">Outer Glow</div>
<div class="a" style="left:370px;top:525px;width:146px;height:23px;background:#eef0f0;border-top:1px solid #fbfbfb"></div>
<div class="a" style="left:375px;top:530px;width:11px;height:11px;border:1px solid #9a9a9a;background:linear-gradient(135deg,#dcdcdc,#fafafa 60%)"></div>
<div class="t" style="left:391px;top:532px;font-size:10px;color:#111">Drop Shadow</div>
<div class="a" style="left:370px;top:548px;width:146px;height:1px;background:#fbfbfb"></div>
<!-- group boxes -->
<div class="a" style="left:534px;top:231px;width:346px;height:435px;border:1px solid #c2c2c2;border-top-color:#c2c2c2"></div>
<div class="a" style="left:550px;top:225px;width:93px;height:12px;background:#eef0ef"></div>
<div class="t" style="left:557px;top:225px;font-size:10.8px;font-weight:bold;color:#111">Pattern Overlay</div>
<div class="a" style="left:544px;top:245px;width:325px;height:172px;border:1px solid #c2c2c2"></div>
<div class="a" style="left:560px;top:239px;width:50px;height:12px;background:#eef0ef"></div>
<div class="t" style="left:567px;top:239px;font-size:10.8px;font-weight:bold;color:#111">Pattern</div>
<div class="t" style="left:567px;top:263px;font-size:10px;color:#111">Blend Mode:</div>
<div class="a" style="left:628px;top:256px;width:123px;height:22px;background:#fff;border:1px solid #e2e2e2"></div>
<div class="t" style="left:632px;top:263px;font-size:10px;color:#111">Normal</div>
<svg class="ic" style="left:738px;top:266px" width="9" height="6"><path d="M0 0H8L4 5Z" fill="#111"/></svg>
<div class="t" style="left:586px;top:287px;font-size:10px;color:#111">Opacity:</div>
<div class="a" style="left:632px;top:287px;width:102px;height:5px;border-radius:3px;background:linear-gradient(#999,#cfcfcf);border:1px solid #a5a5a5"></div>
<svg class="ic" style="left:726px;top:287px" width="13" height="12"><path d="M1 11V6L6.5 1L12 6V11Z" fill="url(#thg)" stroke="#8a8a8a"/><defs><linearGradient id="thg" x1="0" y1="0" x2="0" y2="1"><stop offset="0" stop-color="#fff"/><stop offset="1" stop-color="#cfcfcf"/></linearGradient></defs></svg>
<div class="a" style="left:742px;top:283px;width:53px;height:18px;background:#fff;border:1px solid #e2e2e2"></div>
<div class="t" style="left:747px;top:288px;font-size:10px;color:#111">100</div>
<div class="t" style="left:798px;top:287px;font-size:10px;color:#111">%</div>
<div class="t" style="left:587px;top:333px;font-size:10px;color:#111">Pattern:</div>
<!-- pattern thumb -->
<div class="a" style="left:629px;top:307px;width:74px;height:64px;background:#fff;border:2px solid #1a1a1a"></div>
<div class="a" style="left:632px;top:310px;width:57px;height:58px;overflow:hidden;background:#6b7b98">
 <div class="a" style="left:-8px;top:-10px;width:30px;height:30px;border-radius:50%;background:radial-gradient(circle at 40% 35%,#a2b1c9,#7686a3 60%,#56657f)"></div>
 <div class="a" style="left:14px;top:-12px;width:30px;height:30px;border-radius:50%;background:radial-gradient(circle at 45% 40%,#98a8c2,#6f7f9c 65%,#52617b)"></div>
 <div class="a" style="left:34px;top:2px;width:28px;height:30px;border-radius:50%;background:radial-gradient(circle at 40% 30%,#dfe7f3 0,#b5c2d7 12%,#7e8eab 55%,#5a6984)"></div>
 <div class="a" style="left:-10px;top:16px;width:22px;height:26px;border-radius:50%;background:radial-gradient(circle at 50% 40%,#92a2bd,#687895 65%,#51607a)"></div>
 <div class="a" style="left:8px;top:16px;width:32px;height:28px;border-radius:50%;background:radial-gradient(circle at 30% 30%,#f4f8fd 0,#c6d2e4 10%,#8797b3 50%,#5e6d88)"></div>
 <div class="a" style="left:38px;top:26px;width:26px;height:28px;border-radius:50%;background:radial-gradient(circle at 40% 35%,#9eadc6,#72829f 60%,#56657f)"></div>
 <div class="a" style="left:-6px;top:38px;width:26px;height:26px;border-radius:50%;background:radial-gradient(circle at 45% 35%,#93a3be,#6a7a97 65%,#52617b)"></div>
 <div class="a" style="left:12px;top:36px;width:30px;height:24px;border-radius:50%;background:radial-gradient(circle at 40% 25%,#b0bdd3,#7f8fab 55%,#5c6b86)"></div>
 <div class="a" style="left:30px;top:48px;width:28px;height:22px;border-radius:50%;background:radial-gradient(circle at 45% 35%,#9aa9c2,#6f7f9c 60%,#55647e)"></div>
</div>
<div class="a" style="left:690px;top:309px;width:2px;height:60px;background:#111"></div>
<div class="a" style="left:692px;top:309px;width:9px;height:60px;border-radius:3px;background:linear-gradient(90deg,#cfcfcf,#eef0ef 50%,#d5d5d5);border:1px solid #a0a0a0"></div>
<svg class="ic" style="left:693px;top:337px" width="7" height="5"><path d="M0 0H6L3 4Z" fill="#111"/></svg>
<div class="a" style="left:712px;top:330px;width:20px;height:17px;background:#e6e6e6;border:1px solid #f6f6f6"></div>
<svg class="ic" style="left:715px;top:332px" width="14" height="13"><path d="M3.5 2.5H10.5V10.5H6.5L3.5 7.5Z" fill="#f4f4f4" stroke="#8a8a8a"/><path d="M3.5 7.5H6.5V10.5" fill="#cfcfcf" stroke="#8a8a8a"/></svg>
<div class="a" style="left:744px;top:330px;width:90px;height:18px;border-radius:3px;border:1px solid #8c8c8c;background:linear-gradient(#fbfbfb,#ececec 45%,#dbdbdb 55%,#cfcfcf)"></div>
<div class="t" style="left:755px;top:334px;font-size:10.5px;color:#111">Snap to Origin</div>
<!-- hidden control & outer % -->
<div class="t" style="left:798px;top:378px;font-size:10px;color:#111">%</div>
<div class="a" style="left:795px;top:423px;width:9px;height:19px;border-radius:3px;border:1px solid #aaa;background:linear-gradient(#fafafa,#dcdcdc)"></div>
<!-- buttons -->
<div class="a" style="left:896px;top:227px;width:91px;height:18px;border-radius:3px;border:1px solid #707070;background:linear-gradient(#f6f6f6,#e9e9e9 45%,#dcdcdc 55%,#cdcdcd)"></div>
<div class="t" style="left:933px;top:231px;font-size:12px;color:#111">OK</div>
<div class="a" style="left:896px;top:256px;width:91px;height:18px;border-radius:3px;border:1px solid #707070;background:linear-gradient(#f6f6f6,#e9e9e9 45%,#dcdcdc 55%,#cdcdcd)"></div>
<div class="t" style="left:924px;top:260px;font-size:11.5px;color:#111">Cancel</div>
<div class="a" style="left:896px;top:284px;width:91px;height:19px;border-radius:3px;border:1px solid #3c7fb1;box-shadow:inset 0 0 0 1px #48c6f4;background:linear-gradient(#eaf6fd,#d9f0fc 45%,#bee6fd 55%,#a7d9f5)"></div>
<div class="t" style="left:906px;top:289px;font-size:12.8px;color:#111">New Style...</div>
<div class="a" style="left:908px;top:312px;width:13px;height:13px;border:1px solid #8f8f8f;background:linear-gradient(135deg,#dfe3e8,#fdfdfd)"></div>
<svg class="ic" style="left:910px;top:314px" width="10" height="10"><path d="M1.5 5L4 8.5L9 0.5" fill="none" stroke="#2d4a9a" stroke-width="1.7"/></svg>
<div class="t" style="left:925px;top:313px;font-size:12px;color:#111">Preview</div>
<div class="a" style="left:907px;top:334px;width:68px;height:67px;background:#d6d6d8;border:1px solid #c6c6c6"></div>
<div class="a" style="left:925px;top:352px;width:31px;height:32px;background-color:#7485a3;background-image:radial-gradient(circle at 35% 30%,#c2cee0 0,#98a9c4 25%,transparent 55%),radial-gradient(circle at 70% 75%,#aab8cf 0,#8494b0 30%,transparent 60%),linear-gradient(135deg,#8393ae,#667796);background-size:11px 11px,9px 10px,100% 100%;background-position:0 0,5px 3px,0 0"></div>
<!-- pattern popup -->
<div class="a" style="left:536px;top:372px;width:262px;height:159px;background:#eef0ef;border:1px solid #c4c4c4;border-right-color:#7a7a7a;border-bottom-color:#8a8a8a;box-shadow:1px 1px 2px rgba(0,0,0,0.2)"></div>
<div class="a" style="left:548px;top:384px;width:214px;height:134px;background:#a3a3a3;border:1px solid #a3a3a3;overflow:hidden">
<div class="a" style="left:0px;top:0;width:32px;height:7px;background:#f4f4f4"></div>
<div class="a" style="left:2px;top:0;width:28px;height:5px;background-color:#cfcfcf"></div>
<div class="a" style="left:33px;top:0;width:32px;height:7px;background:#f4f4f4"></div>
<div class="a" style="left:35px;top:0;width:28px;height:5px;background-color:#f6f6f6"></div>
<div class="a" style="left:66px;top:0;width:32px;height:7px;background:#f4f4f4"></div>
<div class="a" style="left:68px;top:0;width:28px;height:5px;background-color:#2b2b2b"></div>
<div class="a" style="left:99px;top:0;width:32px;height:7px;background:#f4f4f4"></div>
<div class="a" style="left:101px;top:0;width:28px;height:5px;background-color:#d3d3d3"></div>
<div class="a" style="left:132px;top:0;width:31px;height:7px;background:#f4f4f4"></div>
<div class="a" style="left:134px;top:0;width:27px;height:5px;background-color:#343434"></div>
<div class="a" style="left:164px;top:0;width:32px;height:7px;background:#f4f4f4"></div>
<div class="a" style="left:166px;top:0;width:28px;height:5px;background-color:#2e2e2e"></div>
<div class="a" style="left:0px;top:8px;width:32px;height:32px;background:#f4f4f4"></div>
<div class="a" style="left:2px;top:10px;width:28px;height:28px;background-color:#fbfbfb;"></div>
<div class="a" style="left:33px;top:8px;width:32px;height:32px;background:#f4f4f4"></div>
<div class="a" style="left:35px;top:10px;width:28px;height:28px;background-color:#e9e9e9;background-image:radial-gradient(circle,#cfcfcf 0 0.6px,transparent 1px);background-size:3px 3px"></div>
<div class="a" style="left:66px;top:8px;width:32px;height:32px;background:#f4f4f4"></div>
<div class="a" style="left:68px;top:10px;width:28px;height:28px;background-color:#171717;background-image:radial-gradient(circle,#262626 0 0.6px,transparent 1px);background-size:4px 4px"></div>
<div class="a" style="left:99px;top:8px;width:32px;height:32px;background:#f4f4f4"></div>
<div class="a" style="left:101px;top:10px;width:28px;height:28px;background-color:#efefef;background-image:linear-gradient(transparent 13px,#d6d6d6 13px 14px,transparent 14px)"></div>
<div class="a" style="left:132px;top:8px;width:31px;height:32px;background:#f4f4f4"></div>
<div class="a" style="left:134px;top:10px;width:27px;height:28px;background-color:#151515;"></div>
<div class="a" style="left:164px;top:8px;width:32px;height:32px;background:#f4f4f4"></div>
<div class="a" style="left:166px;top:10px;width:28px;height:28px;background-color:#141414;"></div>
<div class="a" style="left:0px;top:41px;width:32px;height:32px;background:#f4f4f4"></div>
<div class="a" style="left:2px;top:43px;width:28px;height:28px;background-color:#a9a9a9;background-image:radial-gradient(circle at 30% 30%,#bdbdbd,transparent 40%),radial-gradient(circle at 70% 65%,#999,transparent 45%)"></div>
<div class="a" style="left:33px;top:41px;width:32px;height:32px;background:#f4f4f4"></div>
<div class="a" style="left:35px;top:43px;width:28px;height:28px;background-color:#ececec;background-image:radial-gradient(circle at 60% 40%,#f6f6f6,transparent 50%)"></div>
<div class="a" style="left:66px;top:41px;width:32px;height:32px;background:#f4f4f4"></div>
<div class="a" style="left:68px;top:43px;width:28px;height:28px;background-color:#f3f3f3;"></div>
<div class="a" style="left:99px;top:41px;width:32px;height:32px;background:#f4f4f4"></div>
<div class="a" style="left:101px;top:43px;width:28px;height:28px;background-color:#131313;background-image:repeating-linear-gradient(90deg,#1c1c1c 0 1px,transparent 1px 3px)"></div>
<div class="a" style="left:132px;top:41px;width:31px;height:32px;background:#f4f4f4"></div>
<div class="a" style="left:134px;top:43px;width:27px;height:28px;background-color:#eeeeee;background-image:linear-gradient(transparent 13px,#d8d8d8 13px 14px,transparent 14px)"></div>
<div class="a" style="left:164px;top:41px;width:32px;height:32px;background:#f4f4f4"></div>
<div class="a" style="left:166px;top:43px;width:28px;height:28px;background-color:#f4f3ec;"></div>
<div class="a" style="left:0px;top:74px;width:32px;height:32px;background:#f4f4f4"></div>
<div class="a" style="left:2px;top:76px;width:28px;height:28px;background-color:#1b1b19;background-image:repeating-linear-gradient(0deg,#262622 0 1px,transparent 1px 4px)"></div>
<div class="a" style="left:33px;top:74px;width:32px;height:32px;background:#f4f4f4"></div>
<div class="a" style="left:35px;top:76px;width:28px;height:28px;background-color:#f1efe6;background-image:repeating-linear-gradient(90deg,#e2dfd2 0 1px,transparent 1px 4px)"></div>
<div class="a" style="left:66px;top:74px;width:32px;height:32px;background:#f4f4f4"></div>
<div class="a" style="left:68px;top:76px;width:28px;height:28px;background-color:#3b3b3b;background-image:radial-gradient(circle,#444 0 0.6px,transparent 1px);background-size:3px 3px"></div>
<div class="a" style="left:99px;top:74px;width:32px;height:32px;background:#f4f4f4"></div>
<div class="a" style="left:101px;top:76px;width:28px;height:28px;background-color:#ababab;"></div>
<div class="a" style="left:132px;top:74px;width:31px;height:32px;background:#f4f4f4"></div>
<div class="a" style="left:134px;top:76px;width:27px;height:28px;background-color:#fcfcfc;"></div>
<div class="a" style="left:164px;top:74px;width:32px;height:32px;background:#f4f4f4"></div>
<div class="a" style="left:166px;top:76px;width:28px;height:28px;background-color:#2c2c2c;"></div>
<div class="a" style="left:0px;top:107px;width:32px;height:25px;background:#f4f4f4"></div>
<div class="a" style="left:2px;top:109px;width:28px;height:24px;background-color:#262626;"></div>
<div class="a" style="left:33px;top:107px;width:32px;height:25px;background:#f4f4f4"></div>
<div class="a" style="left:35px;top:109px;width:28px;height:24px;background-color:#f4f4f4;"></div>
<div class="a" style="left:66px;top:107px;width:32px;height:25px;background:#f4f4f4"></div>
<div class="a" style="left:68px;top:109px;width:28px;height:24px;background-color:#f1f1f1;"></div>
<div class="a" style="left:99px;top:107px;width:32px;height:25px;background:#f4f4f4"></div>
<div class="a" style="left:101px;top:109px;width:28px;height:24px;background-color:#3a3a3a;background-image:radial-gradient(circle at 30% 60%,transparent 4px,#2a2a2a 4px 5px,transparent 5px),radial-gradient(circle at 75% 60%,transparent 4px,#2a2a2a 4px 5px,transparent 5px)"></div>
<div class="a" style="left:132px;top:107px;width:31px;height:25px;background:#f4f4f4"></div>
<div class="a" style="left:134px;top:109px;width:27px;height:24px;background-color:#343434;background-image:radial-gradient(circle,#3e3e3e 0 0.6px,transparent 1px);background-size:3px 3px"></div>
<div class="a" style="left:164px;top:107px;width:32px;height:25px;background:#f4f4f4"></div>
<div class="a" style="left:166px;top:109px;width:28px;height:24px;background-color:#2c2c2c;"></div>
<div class="a" style="left:33px;top:107px;width:32px;height:30px;background:#f4f4f4"></div>
<div class="a" style="left:36px;top:116px;width:26px;height:16px;background:linear-gradient(90deg,#0c0c0c,#1c1c1c 60%,#0f0f0f)"></div>
<div class="a" style="left:196px;top:0;width:18px;height:134px;background:linear-gradient(90deg,#e2e2e2,#fbfbfb 40%,#e6e6e6);border-left:1px solid #c8c8c8"></div>
<div class="a" style="left:198px;top:75px;width:14px;height:37px;border-radius:2px;background:linear-gradient(90deg,#bcbcbc,#a6a6a6 60%,#b4b4b4);border:1px solid #a0a0a0"></div>
<svg class="ic" style="left:202px;top:6px" width="7" height="4"><path d="M0 4H7L3.5 0Z" fill="#333"/></svg>
<svg class="ic" style="left:202px;top:121px" width="7" height="4"><path d="M0 0H7L3.5 4Z" fill="#333"/></svg>
</div>
<svg class="ic" style="left:769px;top:384px" width="20" height="13"><g fill="#555"><circle cx="6" cy="6" r="3.8"/><path d="M5.2 0h1.6v3h-1.6zM5.2 9h1.6v3h-1.6zM0 5.2h3v1.6h-3zM9 5.2h3v1.6h-3zM1.6 2.7l1.1-1.1 2 2-1.1 1.1zM7.3 8.4l1.1-1.1 2 2-1.1 1.1zM1.6 9.3l2-2 1.1 1.1-2 2zM7.3 3.6l2-2 1.1 1.1-2 2z"/></g><circle cx="6" cy="6" r="2" fill="#eef0ef"/><path d="M14 9H18L16 11Z" fill="#444"/></svg>
<svg class="ic" style="left:786px;top:519px" width="10" height="10"><g fill="#aaa"><rect x="7" y="1" width="1" height="1"/><rect x="4" y="4" width="1" height="1"/><rect x="7" y="4" width="1" height="1"/><rect x="1" y="7" width="1" height="1"/><rect x="4" y="7" width="1" height="1"/><rect x="7" y="7" width="1" height="1"/></g></svg>
<!-- annotation -->
<div class="t" style="left:669px;top:548px;font-size:29px;color:#c3162d;-webkit-text-stroke:0.5px #c3162d;transform:translateX(-50%) scaleX(0.82)">#&nbsp;Langkah 3</div>
<div class="t" style="left:667px;top:591px;font-size:28px;color:#858585;-webkit-text-stroke:0.5px #858585;transform:translateX(-50%) scaleX(0.754)">Pilih Pattern yang dikehendaki</div>
<div class="t" style="left:669px;top:632px;font-size:28px;color:#858585;-webkit-text-stroke:0.5px #858585;transform:translateX(-50%) scaleX(0.761)">dengan menekan butang ini.</div>
<!-- red lines -->
<div class="a" style="left:685px;top:299px;width:23px;height:77px;border:3px solid #ec1b24"></div>
<div class="a" style="left:706px;top:333px;width:158px;height:3px;background:#ec1b24"></div>
<div class="a" style="left:861px;top:333px;width:3px;height:224px;background:#ec1b24"></div>
<div class="a" style="left:861px;top:554px;width:124px;height:3px;background:#ec1b24"></div>
<div class="a" style="left:981px;top:554px;width:3px;height:93px;background:#ec1b24"></div>
<div class="a" style="left:806px;top:644px;width:178px;height:3px;background:#ec1b24"></div>
<div class="a" style="left:700px;top:627px;width:109px;height:39px;border:3px solid #ec1b24"></div>
<!-- DIALOG_END -->

<!-- ===== RIGHT DOCK ===== -->
<div class="a" style="left:1121px;top:64px;width:183px;height:13px;background:#363636"></div>
<svg class="ic" style="left:1144px;top:67px" width="9" height="8"><path d="M4 0L0 4L4 8ZM8 0L4 4L8 8Z" fill="#d8d8d8"/></svg>
<svg class="ic" style="left:1291px;top:67px" width="9" height="8"><path d="M4 0L0 4L4 8ZM8 0L4 4L8 8Z" fill="#d8d8d8"/></svg>
<div class="a" style="left:1121px;top:77px;width:38px;height:70px;background:#535553"></div>
<div class="a" style="left:1121px;top:147px;width:38px;height:2px;background:#444"></div>
<div class="a" style="left:1121px;top:149px;width:38px;height:251px;background:#535553"></div>
<div class="a" style="left:1159px;top:77px;width:2px;height:323px;background:#383838"></div>
<div class="grip" style="left:1129px;top:81px;width:21px"></div>
<svg class="ic" style="left:1129px;top:93px" width="21" height="16"><path d="M11 1Q20 1 20 7Q20 12 15 12Q12 11 12 14Q11 16 7 15Q1 13 1 9Q1 1 11 1Z" fill="#cfcfcf"/><circle cx="5" cy="9" r="1.5" fill="#555"/><circle cx="9" cy="11.5" r="1.5" fill="#555"/><circle cx="14" cy="5" r="1.4" fill="#555"/><circle cx="17" cy="8" r="1.4" fill="#555"/><circle cx="13" cy="9.5" r="1.4" fill="#555"/></svg>
<svg class="ic" style="left:1131px;top:123px" width="17" height="14"><rect x="0.5" y="0.5" width="16" height="13" fill="#888" stroke="#ddd"/><path d="M5.5 0V14M11 0V14M0 7H17" stroke="#ddd"/><rect x="1" y="1" width="4" height="6" fill="#333"/><rect x="6" y="1" width="5" height="6" fill="#666"/></svg>

<div class="a" style="left:1161px;top:77px;width:143px;height:41px;background:#535553"></div>
<div class="a" style="left:1161px;top:118px;width:143px;height:2px;background:#3c3c3c"></div>
<div class="grip" style="left:1223px;top:81px;width:21px"></div>
<svg class="ic" style="left:1172px;top:92px" width="19" height="19"><circle cx="9.5" cy="9.5" r="8.5" fill="#d0d0d0"/><path d="M16 4L4 16A8.5 8.5 0 0 0 16 4Z" fill="#6e6e6e"/><circle cx="9.5" cy="9.5" r="8.5" fill="none" stroke="#c8c8c8" stroke-width="1"/></svg>
<div class="t pl" style="left:1199px;top:97px">Adjustments</div>

<div class="a" style="left:1161px;top:120px;width:143px;height:69px;background:#535553"></div>
<div class="a" style="left:1161px;top:189px;width:143px;height:2px;background:#3c3c3c"></div>
<div class="grip" style="left:1223px;top:123px;width:21px"></div>
<svg class="ic" style="left:1172px;top:135px" width="20" height="20"><path d="M13 1H18M16 1V14M14 1V14" stroke="#d0d0d0" stroke-width="1.5"/><path d="M14 1Q9 1 9 5Q9 8 14 8" fill="#d0d0d0"/><rect x="1.5" y="12.5" width="5" height="5" fill="none" stroke="#ccc"/><rect x="4.5" y="15.5" width="5" height="4" fill="#888" stroke="#ccc"/></svg>
<div class="t pl" style="left:1199px;top:139px">Paragraph Styles</div>
<svg class="ic" style="left:1172px;top:162px" width="20" height="20"><path d="M8 13L13 1L18 13M10 9H16" fill="none" stroke="#d0d0d0" stroke-width="1.6"/><rect x="1.5" y="12.5" width="5" height="5" fill="none" stroke="#ccc"/><rect x="4.5" y="15.5" width="5" height="4" fill="#888" stroke="#ccc"/></svg>
<div class="t pl" style="left:1199px;top:168px">Character Styles</div>

<div class="a" style="left:1161px;top:191px;width:143px;height:41px;background:#535553"></div>
<div class="a" style="left:1161px;top:232px;width:143px;height:1px;background:#3c3c3c"></div>
<div class="grip" style="left:1223px;top:195px;width:21px"></div>
<svg class="ic" style="left:1172px;top:204px" width="19" height="20"><path d="M6 0H12L9 4Z" fill="#d0d0d0"/><path d="M9 3V19" stroke="#d0d0d0"/><rect x="1.5" y="7.5" width="16" height="8" fill="none" stroke="#d0d0d0"/><path d="M1 9.5H18M1 13.5H18M6 7V16M12 7V16" stroke="#d0d0d0" stroke-width="0.8" stroke-dasharray="1 1"/></svg>
<div class="t pl" style="left:1199px;top:210px">Timeline</div>

<div class="a" style="left:1161px;top:233px;width:143px;height:100px;background:#535553"></div>
<div class="a" style="left:1161px;top:332px;width:143px;height:1px;background:#3c3c3c"></div>
<div class="grip" style="left:1223px;top:237px;width:21px"></div>
<svg class="ic" style="left:1172px;top:248px" width="19" height="18"><path d="M1 4Q3 1 7 2L18 3V5L7 6Q3 7 1 4Z" fill="#d0d0d0"/><path d="M1 12H10" stroke="#d0d0d0" stroke-width="1.5"/><path d="M11 12Q13 7 18 9Q18 15 13 16Z" fill="#d0d0d0"/></svg>
<div class="t pl" style="left:1199px;top:252px">Brush Presets</div>
<svg class="ic" style="left:1173px;top:275px" width="18" height="20"><path d="M5 10H13V19H5Z" fill="#d0d0d0"/><path d="M7 10L3 2M9 10V0M11 10L15 3" stroke="#d0d0d0" stroke-width="1.8"/></svg>
<div class="t pl" style="left:1199px;top:281px">Brush</div>
<div class="t" style="left:1173px;top:306px;font-size:16px;color:#c8c8c8">A</div>
<div class="a" style="left:1186px;top:305px;width:1px;height:18px;background:#c8c8c8"></div>
<div class="t pl" style="left:1199px;top:310px">Character</div>

<div class="a" style="left:1161px;top:333px;width:143px;height:67px;background:#535553"></div>
<div class="a" style="left:1121px;top:399px;width:183px;height:14px;background:#363636"></div>

<!-- HISTORY -->
<div class="a" style="left:1121px;top:413px;width:183px;height:17px;background:#3c3c3c"></div>
<div class="a" style="left:1121px;top:413px;width:51px;height:17px;background:#555;border-top:1px solid #5e5e5e"></div>
<div class="t" style="left:1129px;top:418px;font-size:9.5px;font-weight:bold;color:#e0e0e0">History</div>
<div class="a" style="left:1121px;top:430px;width:183px;height:33px;background:#545454;border-bottom:1px solid #3e3e3e"></div>
<svg class="ic" style="left:1126px;top:437px" width="16" height="16"><path d="M15 2L7 10" stroke="#cfcfcf" stroke-width="2" stroke-linecap="round"/><path d="M7.5 9Q3 9 1.5 14Q6 14.5 9 11Z" fill="#cfcfcf"/><path d="M2 4H8" stroke="#cfcfcf" stroke-width="1.5"/><path d="M1 4L4 1.5V6.5Z" fill="#cfcfcf"/><path d="M11 9l1 1M13 7l1 1M11.5 12.5l1 1" stroke="#aaa"/></svg>
<div class="a" style="left:1147px;top:434px;width:33px;height:25px;background:#fff;border:1px solid #2a2a2a"></div>
<div class="t" style="left:1186px;top:441px;font-size:10px;color:#eaeaea">Untitled-1</div>
<div class="a" style="left:1121px;top:463px;width:183px;height:2px;background:#5a5a5a;border-bottom:1px solid #474747"></div>
<div class="hi" style="top:465px;background:#535553"><div class="hcb"></div><svg class="ic" style="left:33px;top:4px" width="15" height="17"><path d="M1 1H10L14 4V16H1Z" fill="#aaa" stroke="#ccc"/><path d="M3 6H12M3 8.5H12M3 11H12M3 13.5H12" stroke="#555"/></svg><div class="ht">New</div></div>
<div class="hi" style="top:489px;background:#535553"><div class="hcb"></div><div class="t" style="left:33px;top:2px;font-family:'Liberation Serif',serif;font-size:19px;color:#c8c8c8">T</div><div class="ht">Type Tool</div></div>
<div class="hi" style="top:513px;background:#535553"><div class="hcb"></div><div class="t" style="left:33px;top:2px;font-family:'Liberation Serif',serif;font-size:19px;color:#c8c8c8">T</div><div class="ht">Edit Type Layer</div></div>
<div class="hi" style="top:537px;background:#535553"><div class="hcb"></div><svg class="ic" style="left:31px;top:4px" width="20" height="16"><path d="M1 1L8.8 7.8L5 8.3L1.6 12Z" fill="#c4c4c4"/><path d="M13.5 6V14M10.5 10H16.5" stroke="#c4c4c4" stroke-width="1.3"/><path d="M13.5 4.5l-2 2.2h4zM13.5 15.5l-2-2.2h4zM8.8 10l2.2-2v4zM18.2 10l-2.2-2v4z" fill="#c4c4c4"/></svg><div class="ht">Move</div></div>
<div class="hi" style="top:561px;background:#535553"><div class="hcb"></div><svg class="ic" style="left:33px;top:4px" width="15" height="17"><path d="M1 1H10L14 4V16H1Z" fill="#aaa" stroke="#ccc"/><path d="M3 6H12M3 8.5H12M3 11H12M3 13.5H12" stroke="#555"/></svg><div class="ht">Free Transform</div></div>
<div class="hi" style="top:585px;background:#5a6b80"><div class="hcb" style="background:#5d6c7e;border-color:#4d5a6a"></div><svg class="ic" style="left:31px;top:4px" width="20" height="16"><path d="M1 1L8.8 7.8L5 8.3L1.6 12Z" fill="#c8ccd0"/><path d="M13.5 6V14M10.5 10H16.5" stroke="#c8ccd0" stroke-width="1.3"/><path d="M13.5 4.5l-2 2.2h4zM13.5 15.5l-2-2.2h4zM8.8 10l2.2-2v4zM18.2 10l-2.2-2v4z" fill="#c8ccd0"/></svg><div class="ht">Move</div></div>
<div class="a" style="left:1121px;top:609px;width:183px;height:87px;background:#474747"></div>
<div class="a" style="left:1121px;top:696px;width:183px;height:21px;background:#535553;border-top:1px solid #3e3e3e"></div>
<svg class="ic" style="left:1240px;top:700px" width="16" height="14"><path d="M7 1H12L15 4V12H7Z" fill="#ccc"/><path d="M1 8H9M5 4V12" stroke="#ddd" stroke-width="2.2"/></svg>
<svg class="ic" style="left:1272px;top:701px" width="16" height="13"><path d="M1 3H4L5.5 1H10.5L12 3H15V12H1Z" fill="#ccc"/><circle cx="8" cy="7.5" r="2.8" fill="#555"/><circle cx="8" cy="7.5" r="1.6" fill="#ccc"/></svg>
<div class="a" style="left:1121px;top:717px;width:183px;height:1px;background:#333"></div>
<div class="a" style="left:1121px;top:718px;width:183px;height:7px;background:#535553"></div>
<div class="grip" style="left:1222px;top:719px;width:20px"></div>
<div class="a" style="left:1121px;top:725px;width:183px;height:67px;background:#565656;border-top:1px solid #3a3a3a"></div>
<div class="a" style="left:1159px;top:725px;width:2px;height:67px;background:#383838"></div>

<!-- TASKBAR -->
<div class="a" style="left:0;top:792px;width:1304px;height:2px;background:#1d2a36"></div>
<div class="a" style="left:14px;top:788px;width:28px;height:28px;border-radius:50%;background:radial-gradient(circle at 50% 25%,#e4eef4,#a9c6da 50%,#3d6f96);border:1px solid #8fb0c8"></div>
</body></html>
